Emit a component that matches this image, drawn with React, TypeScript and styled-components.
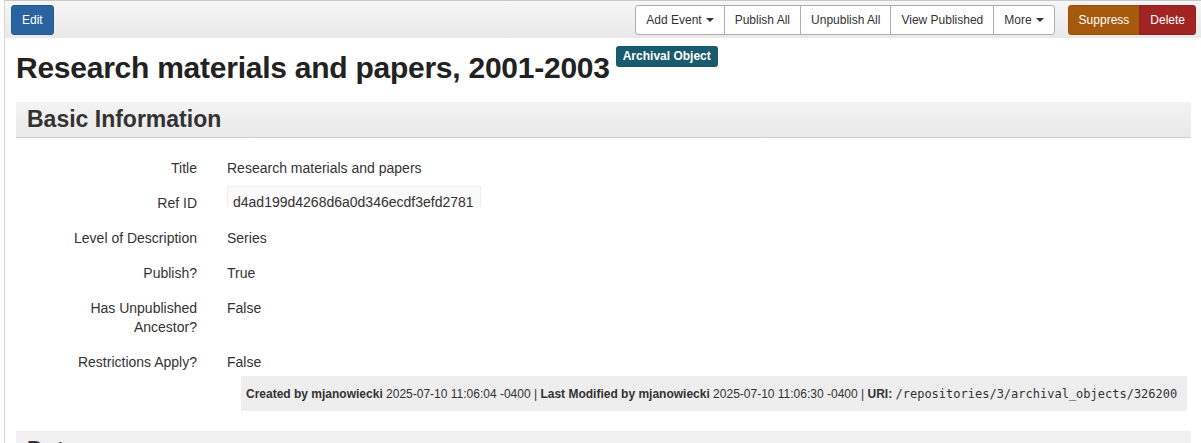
import React from "react";
import styled, { createGlobalStyle } from "styled-components";

const Global = createGlobalStyle`
  html, body { margin: 0; padding: 0; background: #fff; }
  body {
    font-family: "Liberation Sans", Arial, sans-serif;
    font-size: 14px;
    color: #333;
  }
`;

const Frame = styled.div`
  margin-left: 4px;
  border-left: 1px solid #d6d6d6;
  border-top: 1px solid #c8c8c8;
  height: 443px;
  overflow: hidden;
  box-sizing: border-box;
`;

const Toolbar = styled.div`
  display: flex;
  align-items: center;
  justify-content: space-between;
  height: 37px;
  padding: 0 5px 0 6px;
  background: linear-gradient(#f6f6f6, #e9e9e9);
  box-sizing: border-box;
`;

const Right = styled.div`
  display: flex;
  align-items: center;
  gap: 13px;
`;

const Group = styled.div`
  display: flex;
`;

const Btn = styled.button<{ $bg?: string; $border?: string; $fg?: string }>`
  font-family: "Liberation Sans", Arial, sans-serif;
  font-size: 12px;
  height: 30px;
  padding: 0 10px;
  background: ${(p) => p.$bg || "#fff"};
  color: ${(p) => p.$fg || "#333"};
  border: 1px solid ${(p) => p.$border || "#adadad"};
  border-radius: 3px;
  display: inline-flex;
  align-items: center;
  gap: 4px;
  cursor: pointer;
`;

const GroupBtn = styled(Btn)`
  border-radius: 0;
  margin-left: -1px;
  &:first-child { border-radius: 3px 0 0 3px; margin-left: 0; }
  &:last-child { border-radius: 0 3px 3px 0; }
`;

const Caret = styled.span`
  display: inline-block;
  width: 0;
  height: 0;
  border-left: 4px solid transparent;
  border-right: 4px solid transparent;
  border-top: 4px solid #333;
  margin-top: 1px;
`;

const Content = styled.div`
  padding: 0 10px 0 11px;
`;

const TitleRow = styled.div`
  display: flex;
  align-items: flex-start;
  gap: 6px;
  padding-top: 8px;
  height: 56px;
  box-sizing: border-box;
`;

const Title = styled.h1`
  margin: 0;
  font-size: 30px;
  font-weight: 700;
  line-height: 44px;
  color: #222;
  letter-spacing: -0.25px;
`;

const Badge = styled.span`
  background: #195a6d;
  color: #fff;
  font-size: 12px;
  font-weight: 700;
  padding: 3px 7px 4px;
  border-radius: 3px;
  line-height: 14px;
`;

const SectionHead = styled.h2`
  margin: 8px 0 0;
  height: 36px;
  box-sizing: border-box;
  padding: 0 11px;
  display: flex;
  align-items: center;
  font-size: 23px;
  font-weight: 700;
  color: #333;
  background: linear-gradient(#f3f3f3, #e9e9e9);
  border-bottom: 1px solid #cfcfcf;
`;

const Rows = styled.div`
  display: flex;
  flex-direction: column;
  gap: 16px;
  padding-top: 21px;
`;

const Row = styled.div`
  display: grid;
  grid-template-columns: 181px 1fr;
  column-gap: 30px;
  line-height: 19px;
`;

const Label = styled.div`
  text-align: right;
`;

const Value = styled.div`
  height: 19px;
`;

const Code = styled.span`
  display: inline-block;
  vertical-align: top;
  box-sizing: border-box;
  margin-top: -8px;
  height: 21px;
  padding: 6px 6px 0 5px;
  line-height: 19px;
  background: #fafafa;
  border: 1px solid #eeeeee;
  border-bottom: none;
  font-size: 14px;
`;

const Footer = styled.div`
  margin: 4px 4px 0 225px;
  background: #eeeeee;
  height: 35px;
  display: flex;
  align-items: center;
  padding: 0 5px;
  font-size: 12px;
  color: #333;
  white-space: nowrap;
`;

const Mono = styled.span`
  font-family: "DejaVu Sans Mono", monospace;
  font-size: 12px;
`;

const NextHead = styled(SectionHead)`
  margin-top: 20px;
  background: #f0f0f0;
  align-items: flex-start;
  padding-top: 6px;
`;

export default function App() {
  const rows: [React.ReactNode, React.ReactNode][] = [
    ["Title", "Research materials and papers"],
    ["Ref ID", <Code>d4ad199d4268d6a0d346ecdf3efd2781</Code>],
    ["Level of Description", "Series"],
    ["Publish?", "True"],
    [
      <>
        Has Unpublished
        <br />
        Ancestor?
      </>,
      "False",
    ],
    ["Restrictions Apply?", "False"],
  ];
  return (
    <>
      <Global />
      <Frame>
        <Toolbar>
          <Btn $bg="#2a64a0" $border="#245a91" $fg="#fff">Edit</Btn>
          <Right>
            <Group>
              <GroupBtn>Add Event <Caret /></GroupBtn>
              <GroupBtn>Publish All</GroupBtn>
              <GroupBtn>Unpublish All</GroupBtn>
              <GroupBtn>View Published</GroupBtn>
              <GroupBtn>More <Caret /></GroupBtn>
            </Group>
            <Group>
              <GroupBtn $bg="#a65a0d" $border="#9a520b" $fg="#fff">Suppress</GroupBtn>
              <GroupBtn $bg="#a02424" $border="#962020" $fg="#fff">Delete</GroupBtn>
            </Group>
          </Right>
        </Toolbar>
        <Content>
          <TitleRow>
            <Title>Research materials and papers, 2001-2003</Title>
            <Badge>Archival Object</Badge>
          </TitleRow>
          <SectionHead>Basic Information</SectionHead>
          <Rows>
            {rows.map(([l, v], i) => (
              <Row key={i}>
                <Label>{l}</Label>
                <Value>{v}</Value>
              </Row>
            ))}
          </Rows>
          <Footer>
            <b>Created by mjanowiecki</b>&nbsp;2025-07-10 11:06:04 -0400 |&nbsp;
            <b>Last Modified by mjanowiecki</b>&nbsp;2025-07-10 11:06:30 -0400 |&nbsp;
            <b>URI:</b>&nbsp;<Mono>/repositories/3/archival_objects/326200</Mono>
          </Footer>
          <NextHead>Dates</NextHead>
        </Content>
      </Frame>
    </>
  );
}
